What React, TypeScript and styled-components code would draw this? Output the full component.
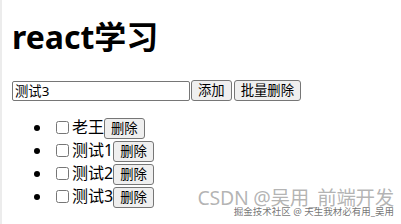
import React, { useState } from 'react';
import styled, { createGlobalStyle } from 'styled-components';

const GlobalStyle = createGlobalStyle`
  html, body {
    margin: 0;
    padding: 0;
    background: #ffffff;
  }
  body {
    font-family: "Microsoft YaHei", "Noto Sans", "Noto Sans CJK SC", sans-serif;
    font-size: 16px;
    color: #000;
  }
`;

interface Item {
    id: number;
    name: string;
}

export default function App() {
    const [value, setValue] = useState('测试3');
    const [list] = useState<Item[]>([
        { id: 1, name: '老王' },
        { id: 2, name: '测试1' },
        { id: 3, name: '测试2' },
        { id: 4, name: '测试3' },
    ]);

    return (
        <Frame>
            <GlobalStyle />
            <Page>
                <Title>react学习</Title>
                <Toolbar>
                    <TextInput value={value} onChange={(e) => setValue(e.target.value)} />
                    <Btn>添加</Btn>
                    <Btn>批量删除</Btn>
                </Toolbar>
                <List>
                    {list.map((item) => (
                        <Row key={item.id}>
                            <Check type="checkbox" />
                            {item.name}
                            <Btn>删除</Btn>
                        </Row>
                    ))}
                </List>
            </Page>
            <Watermark>
                <span className="big">CSDN @吴用_前端开发</span>
                <span className="small">掘金技术社区 @ 天生我材必有用_吴用</span>
            </Watermark>
        </Frame>
    );
}

const Frame = styled.div`
    position: relative;
    width: 401px;
    height: 224px;
    overflow: hidden;
    border-left: 2px solid #ececec;
    box-sizing: border-box;
`;

const Page = styled.div`
    padding: 18px 0 0 10px;
`;

const Title = styled.h1`
    margin: 0 0 24px;
    font-size: 32px;
    font-weight: 700;
    line-height: 38px;
`;

const Toolbar = styled.div`
    display: flex;
    align-items: center;
    height: 21px;
`;

const TextInput = styled.input`
    box-sizing: border-box;
    width: 178px;
    height: 20px;
    margin: 0 1px 0 0;
    padding: 0 2px;
    border: 1px solid #767676;
    border-radius: 2px;
    font-family: inherit;
    font-size: 13.33px;
    color: #000;
`;

const Btn = styled.button`
    box-sizing: border-box;
    height: 21px;
    margin: 0 2px 0 0;
    padding: 0 6px;
    border: 1px solid #767676;
    border-radius: 3px;
    background: #efefef;
    font-family: inherit;
    font-size: 13.33px;
    color: #000;
    line-height: 19px;
`;

const List = styled.ul`
    margin: 15px 0 0;
    padding-left: 40px;
`;

const Row = styled.li`
    height: 23px;
    line-height: 23px;
    font-size: 16px;
`;

const Check = styled.input`
    width: 13px;
    height: 13px;
    margin: 0 3px 0 4px;
    vertical-align: -1px;
`;

const Watermark = styled.div`
    position: absolute;
    right: 7px;
    bottom: 7px;
    display: flex;
    flex-direction: column;
    align-items: flex-end;
    pointer-events: none;

    .big {
        font-size: 19.5px;
        color: rgba(130, 130, 130, 0.6);
        line-height: 20px;
        letter-spacing: -0.3px;
        margin-bottom: -2px;
    }
    .small {
        font-size: 9.5px;
        color: rgba(80, 80, 80, 0.8);
        line-height: 11px;
    }
`;
